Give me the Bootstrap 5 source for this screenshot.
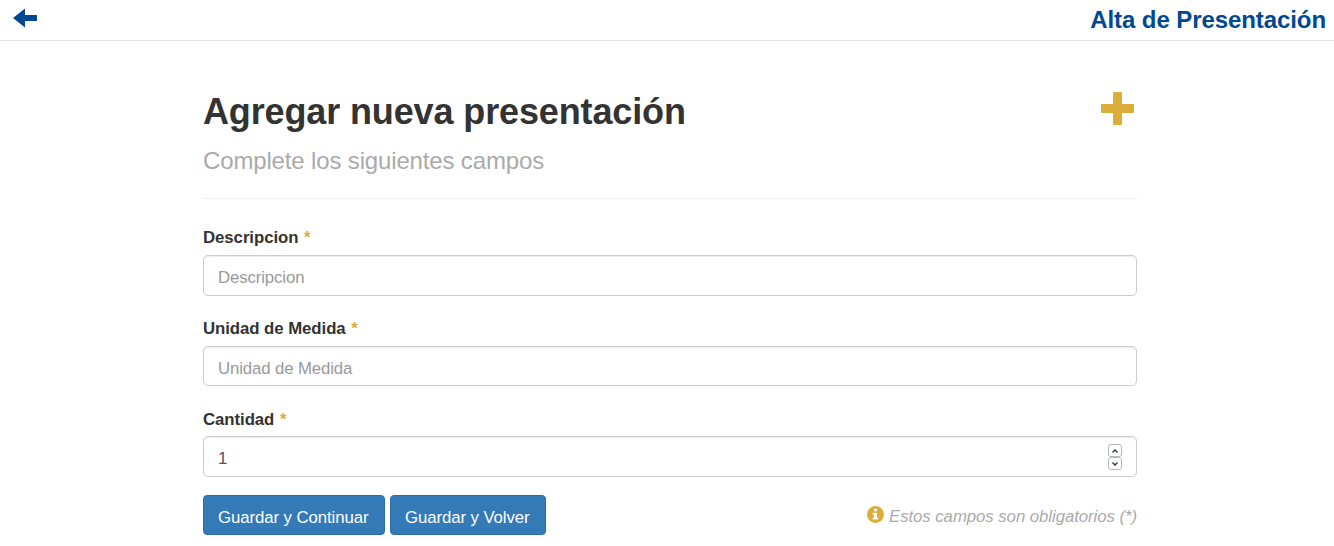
<!DOCTYPE html>
<html lang="es">
<head>
<meta charset="utf-8">
<meta name="viewport" content="width=device-width, initial-scale=1">
<title>Alta de Presentación</title>
<link rel="stylesheet" href="https://cdn.jsdelivr.net/npm/bootstrap@5.3.0/dist/css/bootstrap.min.css">
<style>
body{font-family:"Liberation Sans",Arial,sans-serif;font-size:16.8px;line-height:24px;color:#333;background:#fff;overflow:hidden}
.topbar{height:41px;border-bottom:1px solid #e4e4e4;padding:0 8px 0 13px;color:#004891}
.topbar h2{font-size:24px;line-height:40px;font-weight:700;letter-spacing:-.08px}
.topbar a{color:inherit}
.topbar svg{margin-top:-4px}
.form-area{width:934px;margin-left:203px;padding-top:47px}
.form-head{height:111px;border-bottom:1px solid #eee}
.form-head h1{font-size:36px;line-height:48px;font-weight:700;letter-spacing:-.13px}
.form-head p{font-size:24px;line-height:30px;color:#aaa;margin-top:10px;letter-spacing:-.15px}
.gold{color:#ddad39}
.plus{margin:4px 3px 0 0}
.fields{padding-top:27.2px}
.field{height:90.7px}
.form-label{font-weight:700;line-height:24px;margin-bottom:4.85px;letter-spacing:-.06px}
.form-label .gold{margin-left:1px}
.form-control,.form-control:focus{height:40.5px;font-size:16.8px;line-height:24px;padding:10px 14px 4px;border:1px solid #ccc;border-radius:5px;color:#555;box-shadow:inset 0 1px 1px rgba(0,0,0,.075);letter-spacing:-.12px}
.form-control::placeholder{color:#999}
.form-control[type=number]{appearance:textfield;-moz-appearance:textfield;padding-top:9px}
.stepper{position:absolute;right:15px;top:8px;width:14px}
.stepper button{height:13px;border:1px solid #b4b8bc;border-radius:3px;background:#fff;color:#333;padding:0}
.btn-primary{--bs-btn-bg:#337ab7;--bs-btn-border-color:#2e6da4;font-size:16.8px;line-height:24px;height:40px;padding:10px 1.5px 4px 0;border-radius:4px;letter-spacing:-.08px}
.save-next{width:182px}.save-back{width:156px}
.actions{margin-top:-3.2px}
.required-note{color:#aaa;gap:5px;height:40px;padding-top:4px;letter-spacing:-.06px}
.required-note svg{margin-top:-6px}
</style>
<script src="https://cdn.jsdelivr.net/npm/bootstrap@5.3.0/dist/js/bootstrap.bundle.min.js"></script>
</head>
<body>
<header class="topbar d-flex justify-content-between align-items-center">
  <a href="#" class="d-flex" aria-label="Volver"><svg width="24" height="20" viewBox="0 0 24 20" fill="currentColor"><path d="M0 10 12 .5V7h11.500q.5 0 .5.500v5q0 .5-.5.500H12v6.500z"/></svg></a>
  <h2 class="m-0">Alta de Presentación</h2>
</header>
<main class="form-area">
  <div class="form-head d-flex justify-content-between align-items-start">
    <div><h1 class="m-0">Agregar nueva presentación</h1><p class="mb-0">Complete los siguientes campos</p></div>
    <svg class="plus gold" width="33" height="33" viewBox="0 0 33 33" fill="currentColor"><path d="M13 0h7q1 0 1 1v11h11q1 0 1 1v7q0 1-1 1H21v11q0 1-1 1h-7q-1 0-1-1V21H1q-1 0-1-1v-7q0-1 1-1h11V1q0-1 1-1z"/></svg>
  </div>
  <form class="fields">
    <div class="field"><label class="form-label d-block" for="d">Descripcion <span class="gold">*</span></label><input class="form-control" id="d" placeholder="Descripcion"></div>
    <div class="field"><label class="form-label d-block" for="u">Unidad de Medida <span class="gold">*</span></label><input class="form-control" id="u" placeholder="Unidad de Medida"></div>
    <div class="field"><label class="form-label d-block" for="c">Cantidad <span class="gold">*</span></label>
      <div class="position-relative"><input type="number" class="form-control" id="c" value="1">
        <div class="stepper d-flex flex-column">
          <button type="button" class="d-flex align-items-center justify-content-center" aria-label="Más"><svg width="6" height="4" viewBox="0 0 6 4" fill="none" stroke="currentColor" stroke-width="1.400"><path d="M.5 3.500 3 1l2.500 2.500"/></svg></button>
          <button type="button" class="d-flex align-items-center justify-content-center" aria-label="Menos"><svg width="6" height="4" viewBox="0 0 6 4" fill="none" stroke="currentColor" stroke-width="1.400"><path d="M.5.500 3 3 5.500.5"/></svg></button>
        </div>
      </div>
    </div>
    <div class="actions d-flex justify-content-between">
      <div class="d-flex" style="gap:5px"><button type="button" class="btn btn-primary save-next">Guardar y Continuar</button><button type="button" class="btn btn-primary save-back">Guardar y Volver</button></div>
      <div class="required-note d-flex align-items-center"><svg class="gold" width="17" height="17" viewBox="0 0 17 17"><circle cx="8.500" cy="8.500" r="8.500" fill="currentColor"/><path fill="#fff" d="M7 2.800h3v2.400H7zM5.700 6.700H10v4.700h1.300v2.100H5.700v-2.100H7V8.700H5.700z"/></svg><em>Estos campos son obligatorios (*)</em></div>
    </div>
  </form>
</main>
</body>
</html>
